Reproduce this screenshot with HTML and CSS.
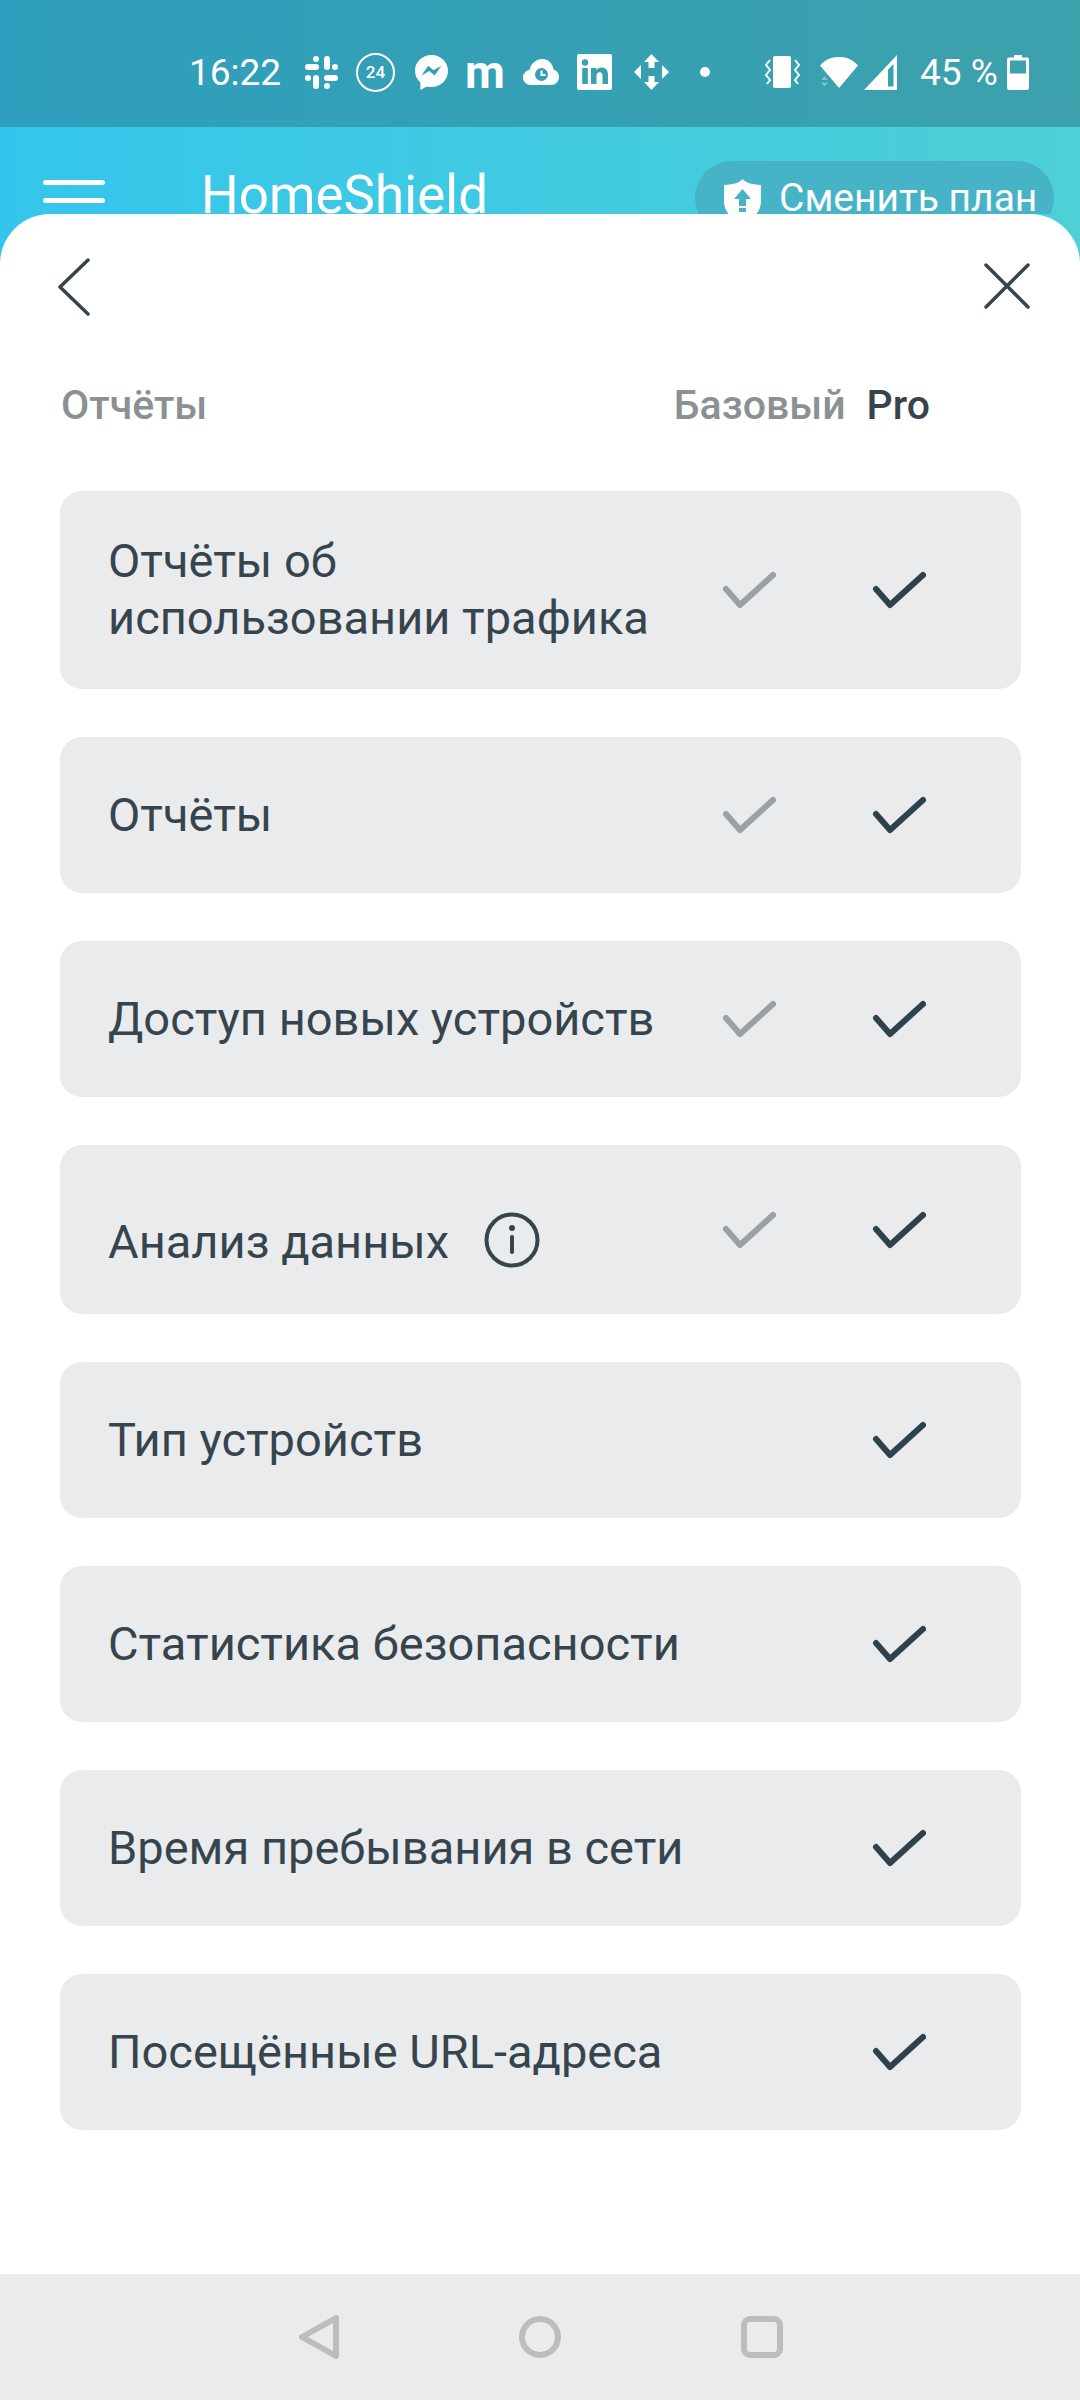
FILE: index.html
```html
<!DOCTYPE html>
<html lang="ru">
<head>
    <meta charset="UTF-8">
    <title>HomeShield</title>
    <link rel="stylesheet" href="styles.css">
</head>
<body>
<div class="statusbar">
    <span class="time">16:22</span>
    <!--slack-->
    <svg class="ic-slack" width="33" height="33" viewBox="0 0 33 33" fill="#fff">
        <rect x="0" y="8" width="14" height="6" rx="3"/><circle cx="11" cy="3" r="3"/>
        <rect x="19" y="0" width="6" height="14" rx="3"/><circle cx="30" cy="11" r="3"/>
        <rect x="19" y="19" width="14" height="6" rx="3"/><circle cx="22" cy="30" r="3"/>
        <rect x="8" y="19" width="6" height="14" rx="3"/><circle cx="3" cy="22" r="3"/>
    </svg>
    <span class="ic-24">24</span>
    <!--messenger-->
    <svg class="ic-msg" width="33" height="35" viewBox="0 0 33 35">
        <path fill="#fff" d="M16.5 0C7.4 0 0 6.9 0 15.8c0 4.8 2 8.8 5.400 11.700V35l6.300-3.500c1.500.4 3.100.6 4.800.6 9.100 0 16.500-7 16.500-16.300C33 6.900 25.600 0 16.500 0z"/>
        <path fill="#319fb8" d="M6.500 20.500l6.800-9.800 5.200 4.500 7.900-4.500-6.800 9.800-5.200-4.500z"/>
    </svg>
    <span class="ic-m">m</span>
    <!--cloud with clock-->
    <svg class="ic-cloud" width="36" height="28" viewBox="0 0 36 28">
        <path fill="#fff" d="M8 27C3.500 27 0 23.800 0 19.500 0 15.500 3 12.500 6.500 12 8 5 13.500 1 19 1c6 0 10.500 4 11.500 10.500 3.300.7 5.500 4 5.500 7.500 0 4.500-3.500 8-8 8z"/>
        <circle cx="18.500" cy="16.500" r="6.500" fill="#36a1b3"/>
        <path fill="none" stroke="#fff" stroke-width="2" d="M18.500 12.500v4.500h4"/>
    </svg>
    <!--linkedin-->
    <svg class="ic-in" width="35" height="36" viewBox="0 0 35 36">
        <rect width="35" height="36" rx="2" fill="#fff"/>
        <circle cx="8" cy="8.500" r="3.200" fill="#37a1b2"/>
        <rect x="5.200" y="14" width="5.600" height="16" fill="#37a1b2"/>
        <path fill="#37a1b2" d="M14 14h5.200v2.300c1-1.700 3-2.700 5.300-2.700 4.800 0 6.500 3 6.500 7.700V30h-5.500v-7.800c0-2.300-.6-4-2.800-4-2.300 0-3.200 1.700-3.200 4V30H14z"/>
    </svg>
    <!--move arrows-->
    <svg class="ic-move" width="35" height="36" viewBox="0 0 35 36" fill="#fff">
        <path d="M17.500 0L25 8h-4.500v6h-6V8H10z"/><path d="M17.500 36L10 28h4.500v-6h6v6H25z"/>
        <path d="M0 18l7-7v14z"/><path d="M35 18l-7-7v14z"/>
    </svg>
    <span class="dot"></span>
    <!--vibrate-->
    <svg class="ic-vib" width="35" height="32" viewBox="0 0 35 32">
        <rect x="8" y="0" width="18" height="32" rx="2" fill="#fff"/>
        <path fill="none" stroke="#fff" stroke-width="2" d="M5 4L1 9l4 5-4 5 4 5-3 4M30 4l4 5-4 5 4 5-4 5 3 4"/>
    </svg>
    <!--wifi-->
    <svg class="ic-wifi" width="38" height="32" viewBox="0 0 38 32">
        <path fill="#fff" d="M0 9.500C5 3.500 11.500 1 19 1s14 2.500 19 8.500L19 32z"/>
        <path fill="#fff" opacity=".35" d="M1 24l3.500-4 3.500 4zM1 26.500h7l-3.500 4z"/>
    </svg>
    <!--signal-->
    <svg class="ic-signal" width="33" height="35" viewBox="0 0 33 35">
        <path fill="#fff" d="M33 0v35H0z"/>
        <path fill="#39a2b1" d="M29.500 9v22.500h-5.500V14.500z"/>
    </svg>
    <span class="batt-text">45 %</span>
    <!--battery-->
    <svg class="ic-batt" width="22" height="35" viewBox="0 0 22 35">
        <path fill="#fff" d="M7 0h8v2.500h5a2 2 0 0 1 2 2V33a2 2 0 0 1-2 2H2a2 2 0 0 1-2-2V4.500a2 2 0 0 1 2-2h5z"/>
        <rect x="3" y="5.500" width="16" height="13" fill="#3ba1ad"/>
    </svg>
</div>

<div class="app">
    <div class="header">
        <div class="burger"><i></i><i></i><i></i></div>
        <div class="brand">HomeShield</div>
        <div class="plan">
            <svg width="37" height="44" viewBox="0 0 37 44">
                <path fill="#fff" d="M18.500 0c3 3.500 8 5.500 18.500 6v16c0 11-7.500 18-18.500 22C7.500 40 0 33 0 22V6C10.500 5.500 15.500 3.500 18.500 0z"/>
                <path fill="#46b3c6" d="M18.500 10l8.500 10h-5v7h-7v-7h-5zM15 29h7v4h-7z"/>
            </svg>
            <span>Сменить план</span>
        </div>
    </div>

    <div class="sheet">
        <div class="sheet-top">
            <svg width="34" height="58" viewBox="0 0 34 58"><path class="line" d="M31 2L3 29l28 27"/></svg>
            <svg class="close" width="46" height="46" viewBox="0 0 46 46"><path class="line" d="M2 2l42 42M44 2L2 44"/></svg>
        </div>

        <div class="cols">
            <span class="cols-name">Отчёты</span>
            <span class="cols-base">Базовый</span>
            <span class="cols-pro">Pro</span>
        </div>

        <div class="list">
            <div class="row">
                <div class="label">Отчёты об<br>использовании трафика</div>
                <svg class="check base" viewBox="0 0 54 38"><path d="M4 18l14 16L51 4"/></svg>
                <svg class="check" viewBox="0 0 54 38"><path d="M4 18l14 16L51 4"/></svg>
            </div>
            <div class="row">
                <div class="label">Отчёты</div>
                <svg class="check base" viewBox="0 0 54 38"><path d="M4 18l14 16L51 4"/></svg>
                <svg class="check" viewBox="0 0 54 38"><path d="M4 18l14 16L51 4"/></svg>
            </div>
            <div class="row">
                <div class="label">Доступ новых устройств</div>
                <svg class="check base" viewBox="0 0 54 38"><path d="M4 18l14 16L51 4"/></svg>
                <svg class="check" viewBox="0 0 54 38"><path d="M4 18l14 16L51 4"/></svg>
            </div>
            <div class="row row-info">
                <div class="label">
                    Анализ данных
                    <svg class="info" width="56" height="56" viewBox="0 0 56 56">
                        <circle cx="28" cy="28" r="25.500" fill="none" stroke="#36454d" stroke-width="4"/>
                        <circle cx="28" cy="16" r="3" fill="#36454d"/>
                        <rect x="26" y="23" width="4" height="19" rx="2" fill="#36454d"/>
                    </svg>
                </div>
                <svg class="check base" viewBox="0 0 54 38"><path d="M4 18l14 16L51 4"/></svg>
                <svg class="check" viewBox="0 0 54 38"><path d="M4 18l14 16L51 4"/></svg>
            </div>
            <div class="row">
                <div class="label">Тип устройств</div>
                <svg class="check" viewBox="0 0 54 38"><path d="M4 18l14 16L51 4"/></svg>
            </div>
            <div class="row">
                <div class="label">Статистика безопасности</div>
                <svg class="check" viewBox="0 0 54 38"><path d="M4 18l14 16L51 4"/></svg>
            </div>
            <div class="row">
                <div class="label">Время пребывания в сети</div>
                <svg class="check" viewBox="0 0 54 38"><path d="M4 18l14 16L51 4"/></svg>
            </div>
            <div class="row">
                <div class="label">Посещённые URL-адреса</div>
                <svg class="check" viewBox="0 0 54 38"><path d="M4 18l14 16L51 4"/></svg>
            </div>
        </div>
    </div>
</div>

<div class="navbar">
    <svg width="42" height="44" viewBox="0 0 42 44"><path d="M39 3L5 22l34 19z"/></svg>
    <svg width="42" height="42" viewBox="0 0 42 42"><circle cx="21" cy="21" r="18"/></svg>
    <svg width="42" height="42" viewBox="0 0 42 42"><rect x="3" y="3" width="36" height="36" rx="6"/></svg>
</div>
</body>
</html>
```

FILE: styles.css
```css
* {
    padding: 0;
    margin: 0;
    box-sizing: border-box;
}

html, body {
    height: 100%;
}

body {
    display: flex;
    flex-direction: column;
    font-family: Roboto, "Liberation Sans", sans-serif;
    color: #36454d;
    background: #fff;
}

/* status bar */
.statusbar {
    height: 127px;
    flex: none;
    display: flex;
    align-items: center;
    padding: 17px 0 0 189px;
    background: linear-gradient(90deg, #2e9fbe, #3ca1ab);
    color: #fff;
    white-space: nowrap;
}

.statusbar svg, .statusbar span {
    flex: none;
}

.time {
    font-size: 37px;
    width: 90px;
    margin-right: 26px;
}

.ic-24 {
    width: 39px;
    height: 39px;
    margin-left: 18px;
    border: 2px solid #fff;
    border-radius: 50%;
    font-size: 17px;
    font-weight: 500;
    line-height: 35px;
    text-align: center;
}

.ic-msg {
    margin-left: 20px;
}

.ic-m {
    width: 36px;
    margin-left: 17px;
    font-size: 46px;
    font-weight: 700;
    line-height: 40px;
    text-align: center;
}

.ic-cloud {
    margin-left: 22px;
}

.ic-in {
    margin-left: 18px;
}

.ic-move {
    margin-left: 22px;
}

.dot {
    width: 10px;
    height: 10px;
    margin-left: 31px;
    border-radius: 50%;
    background: #fff;
}

.ic-vib {
    margin-left: 55px;
}

.ic-wifi {
    margin-left: 20px;
}

.ic-signal {
    margin-left: 6px;
}

.batt-text {
    width: 75px;
    margin-left: 23px;
    font-size: 37px;
}

.ic-batt {
    margin-left: 12px;
}

/* teal area behind the sheet */
.app {
    flex: 1;
    display: flex;
    flex-direction: column;
    min-height: 0;
    background: linear-gradient(90deg, #35c5ec, #4dd0d6);
}

.header {
    height: 87px;
    flex: none;
    display: flex;
    overflow: hidden;
    color: #fff;
}

.burger {
    width: 62px;
    margin: 53px 0 0 43px;
}

.burger i {
    display: block;
    height: 5px;
    margin-bottom: 13px;
    border-radius: 3px;
    background: #fff;
}

.brand {
    margin: 38px 0 0 96px;
    font-size: 53px;
    line-height: 61px;
    flex: 1;
}

.plan {
    width: 359px;
    height: 74px;
    margin: 34px 26px 0 0;
    padding-left: 29px;
    display: flex;
    align-items: center;
    gap: 18px;
    border-radius: 37px;
    background: #46b3c6;
    font-size: 39px;
    white-space: nowrap;
}

.plan svg {
    flex: none;
    margin-top: 6px;
}

/* white sheet */
.sheet {
    flex: 1;
    padding: 44px 0 0;
    border-radius: 50px 50px 0 0;
    background: #fff;
}

.sheet-top {
    display: flex;
    justify-content: space-between;
    align-items: center;
    height: 58px;
    padding: 0 50px 0 57px;
}

.close {
    margin-top: -2px;
}

.line {
    fill: none;
    stroke: #36454d;
    stroke-width: 3.500;
    stroke-linecap: round;
    stroke-linejoin: round;
}

.cols {
    display: flex;
    align-items: center;
    margin-top: 67px;
    padding: 0 150px 0 61px;
    font-size: 41px;
    font-weight: 500;
    line-height: 44px;
    color: #8b9093;
}

.cols-name {
    flex: 1;
}

.cols-pro {
    margin-left: 21px;
    color: #36454d;
}

.list {
    display: flex;
    flex-direction: column;
    gap: 48px;
    margin: 64px 59px 0 60px;
}

.row {
    min-height: 156px;
    display: flex;
    align-items: center;
    padding: 41px 95px 41px 48px;
    border-radius: 22px;
    background: #e9ebed;
}

.row-info {
    min-height: 169px;
    padding-top: 0;
    padding-bottom: 0;
}

.row-info .label {
    padding-top: 26px;
    display: flex;
    align-items: center;
}

.label {
    flex: 1;
    padding-bottom: 2px;
    font-size: 47px;
    line-height: 57px;
}

.info {
    margin: -4px 0 0 35px;
}

.check {
    width: 54px;
    height: 38px;
    flex: none;
    fill: none;
    stroke: #2f424c;
    stroke-width: 6;
    stroke-linecap: round;
    stroke-linejoin: round;
}

.check.base {
    margin-right: 96px;
    stroke: #9aa1a4;
}

/* android nav */
.navbar {
    height: 126px;
    flex: none;
    display: flex;
    justify-content: center;
    align-items: center;
    gap: 180px;
    background: #ebebeb;
}

.navbar svg {
    fill: none;
    stroke: #bdbdbd;
    stroke-width: 6;
    stroke-linejoin: round;
}
```
